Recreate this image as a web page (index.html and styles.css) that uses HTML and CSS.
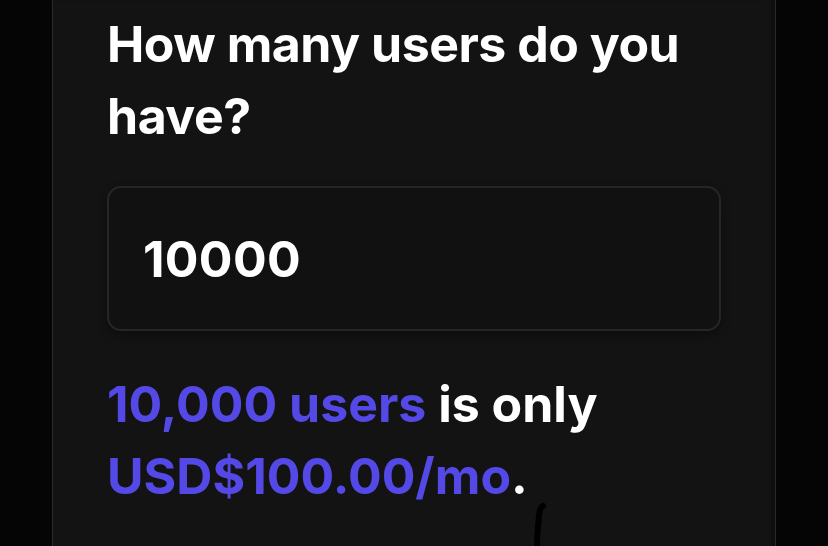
FILE: index.html
```html
<!DOCTYPE html>
<html>
<head>
<meta charset="utf-8">
<link rel="stylesheet" href="styles.css">
</head>
<body>
<div class="page">
  <section class="card">
    <h1 class="question">How many users do you have?</h1>
    <div class="field">
      <input class="users-input" type="text" value="10000">
    </div>
    <p class="result"><span class="accent">10,000 users</span> is only <span class="accent">USD$100.00/mo</span>.</p>
  </section>
  <svg class="mark" width="30" height="60" viewBox="0 0 30 60">
    <path d="M8 60 C8 52 9 40 10 30 C10.5 24 12 21 14 20" fill="none" stroke="#000" stroke-width="6" stroke-linecap="round"/>
  </svg>
</div>
</body>
</html>
```
FILE: styles.css
```css
* { box-sizing: border-box; }
html, body {
  margin: 0;
  padding: 0;
  background: #050505;
  height: 100%;
  overflow: hidden;
}
body {
  font-family: Inter, "Liberation Sans", sans-serif;
  color: #ffffff;
}
.page {
  position: relative;
  width: 828px;
  height: 546px;
}
.card {
  margin-left: 52px;
  width: 724px;
  height: 546px;
  background: #131313;
  border-left: 1px solid #2a2a2a;
  border-right: 1px solid #2a2a2a;
  box-shadow: inset -5px 0 4px -2px rgba(0,0,0,0.35);
  padding: 8px 54px 0 54px;
}
.question {
  margin: 0;
  font-size: 50px;
  line-height: 72px;
  font-weight: 700;
  letter-spacing: -0.5px;
}
.field {
  margin-top: 34px;
}
.users-input {
  display: block;
  width: 100%;
  height: 145px;
  background: #111111;
  border: 2px solid #262626;
  border-radius: 14px;
  padding: 0 0 0 34px;
  color: #ffffff;
  font-family: Inter, "Liberation Sans", sans-serif;
  font-size: 50px;
  font-weight: 700;
  letter-spacing: 0.3px;
  outline: none;
  box-shadow: 0 4px 10px rgba(0,0,0,0.35);
}
.result {
  margin: 37px 0 0 0;
  font-size: 50px;
  line-height: 72px;
  font-weight: 700;
  letter-spacing: 0;
}
.accent {
  color: #5449e6;
}
.mark {
  position: absolute;
  left: 529px;
  top: 486px;
}
```
